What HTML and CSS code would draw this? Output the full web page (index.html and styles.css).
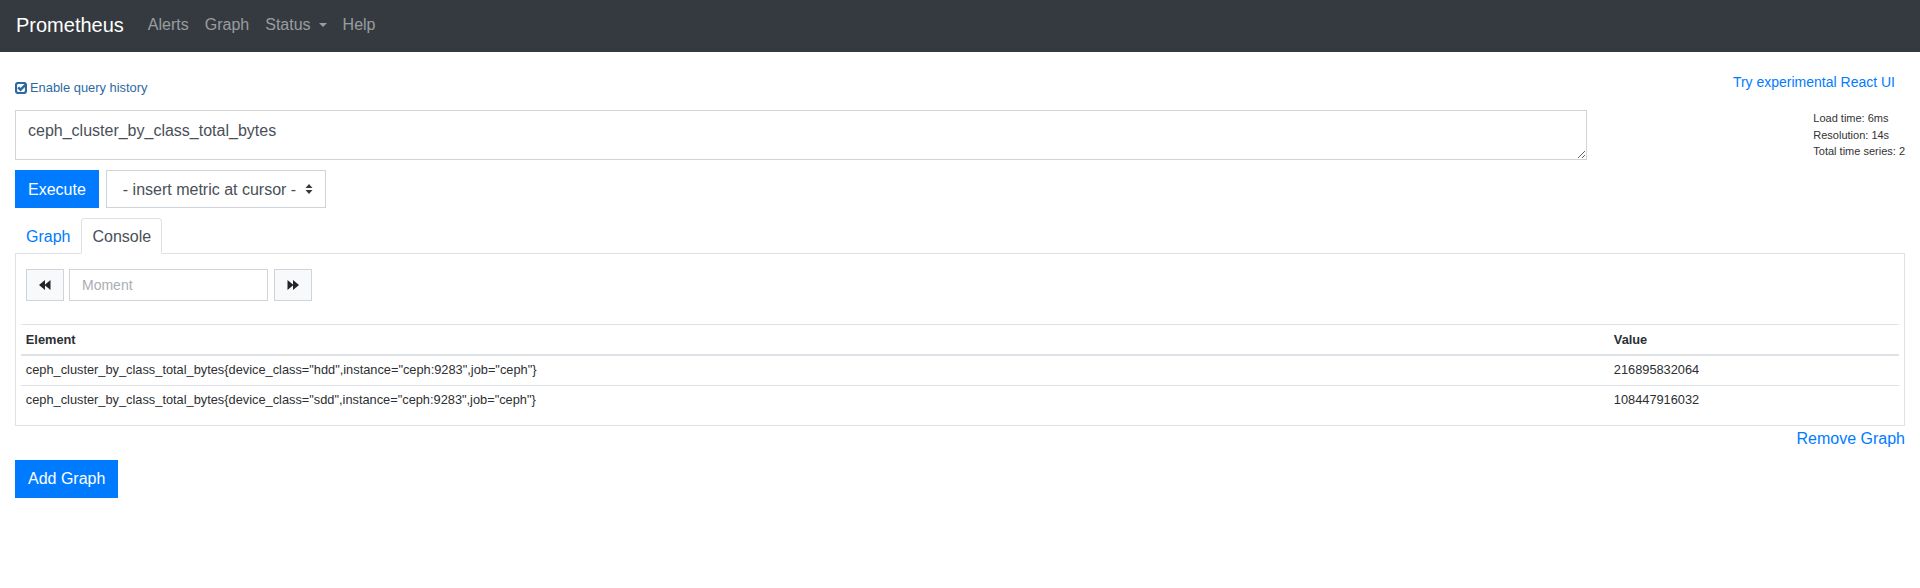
FILE: index.html
```html
<!DOCTYPE html>
<html>
<head>
<meta charset="utf-8">
<title>Prometheus Time Series Collection and Processing Server</title>
<link rel="stylesheet" href="styles.css">
</head>
<body>
<nav class="navbar">
  <a class="brand" href="#">Prometheus</a>
  <ul class="nav-links">
    <li><a href="#">Alerts</a></li>
    <li><a href="#">Graph</a></li>
    <li><a href="#">Status<span class="caret"></span></a></li>
    <li><a href="#">Help</a></li>
  </ul>
</nav>
<main class="container">
  <div class="top-row">
    <label class="history">
      <svg class="check-icon" width="12" height="12" viewBox="0 0 12 12" aria-hidden="true">
        <rect x="1" y="1" width="10" height="10" rx="2.2" ry="2.2" fill="none" stroke="currentColor" stroke-width="2.2"/>
        <path d="M3.2 5.4 L5.5 7.7 L11.2 2" fill="none" stroke="currentColor" stroke-width="2.4"/>
      </svg>
      <span>Enable query history</span>
    </label>
    <a class="react-link" href="#">Try experimental React UI</a>
  </div>
  <div class="query-row">
    <textarea class="expr" spellcheck="false">ceph_cluster_by_class_total_bytes</textarea>
    <div class="stats">
      <div>Load time: 6ms</div>
      <div>Resolution: 14s</div>
      <div>Total time series: 2</div>
    </div>
  </div>
  <div class="exec-row">
    <button class="btn-primary">Execute</button>
    <div class="metric-select">
      <span>- insert metric at cursor -</span>
      <svg class="select-arrows" width="8" height="10" viewBox="0 0 8 10" aria-hidden="true">
        <path d="M4 0 L7.5 4 H0.5 Z M4 10 L0.5 6 H7.5 Z" fill="#343a40"/>
      </svg>
    </div>
  </div>
  <ul class="tabs">
    <li><a class="tab" href="#">Graph</a></li>
    <li><a class="tab active" href="#">Console</a></li>
  </ul>
  <div class="tab-content">
    <div class="moment-row">
      <button class="btn-light" aria-label="back">
        <svg class="step-icon" width="12" height="10" viewBox="0 0 12 10" aria-hidden="true">
          <path d="M0 5 L6 0 V10 Z M5.5 5 L11.5 0 V10 Z" fill="#212529"/>
        </svg>
      </button>
      <input class="moment" type="text" placeholder="Moment">
      <button class="btn-light" aria-label="forward">
        <svg class="step-icon" width="12" height="10" viewBox="0 0 12 10" aria-hidden="true">
          <path d="M12 5 L6 0 V10 Z M6.5 5 L0.5 0 V10 Z" fill="#212529"/>
        </svg>
      </button>
    </div>
    <table class="data">
      <colgroup><col><col class="value-col"></colgroup>
      <thead>
        <tr><th>Element</th><th>Value</th></tr>
      </thead>
      <tbody>
        <tr><td>ceph_cluster_by_class_total_bytes{device_class="hdd",instance="ceph:9283",job="ceph"}</td><td>216895832064</td></tr>
        <tr><td>ceph_cluster_by_class_total_bytes{device_class="sdd",instance="ceph:9283",job="ceph"}</td><td>108447916032</td></tr>
      </tbody>
    </table>
  </div>
  <div class="remove-row"><a href="#">Remove Graph</a></div>
  <button class="btn-primary add-graph">Add Graph</button>
</main>
</body>
</html>
```
FILE: styles.css
```css
* { box-sizing: border-box; }
html, body {
  margin: 0;
  padding: 0;
  background: #fff;
  font-family: "Liberation Sans", Arial, Helvetica, sans-serif;
  font-size: 16px;
  line-height: 1.5;
  color: #212529;
}
a { text-decoration: none; }
ul { list-style: none; margin: 0; padding: 0; }

.navbar {
  height: 52px;
  background: #343a40;
  display: flex;
  align-items: flex-start;
  padding: 10px 16px 0 16px;
}
.brand {
  color: #fff;
  font-size: 20px;
  line-height: 30px;
  margin-right: 16px;
}
.nav-links { display: flex; }
.nav-links a {
  display: flex;
  align-items: center;
  color: rgba(255,255,255,0.5);
  padding: 0 8px;
  line-height: 30px;
}
.caret {
  display: inline-block;
  width: 0;
  height: 0;
  margin-left: 8px;
  border-top: 4px solid rgba(255,255,255,0.5);
  border-left: 4px solid transparent;
  border-right: 4px solid transparent;
}

.container { padding: 0 15px; }

.top-row {
  height: 58px;
  display: flex;
  justify-content: space-between;
  align-items: flex-start;
}
.history {
  margin-top: 26px;
  line-height: 20px;
  font-size: 12.9px;
  color: #2d6aa3;
  display: flex;
  align-items: center;
}
.check-icon { margin-right: 3px; margin-top: -1px; }
.react-link {
  margin-top: 20px;
  margin-right: 10px;
  line-height: 20px;
  font-size: 14px;
  color: #007bff;
}

.query-row {
  display: grid;
  grid-template-columns: 1572px 1fr;
}
.expr {
  display: block;
  width: 100%;
  height: 50px;
  margin: 0;
  padding: 8px 12px 4px 12px;
  font-family: "Liberation Sans", Arial, sans-serif;
  font-size: 16px;
  line-height: 24px;
  color: #495057;
  border: 1px solid #ced4da;
  border-radius: 0;
  outline: none;
  resize: vertical;
}
.stats {
  justify-self: end;
  font-size: 11px;
  line-height: 16.5px;
  color: #333;
}

.exec-row {
  display: flex;
  gap: 7px;
  margin-top: 10px;
}
.btn-primary {
  height: 38px;
  padding: 1px 12px 0 12px;
  background: #007bff;
  border: 1px solid #007bff;
  border-radius: 0;
  color: #fff;
  font-family: "Liberation Sans", Arial, sans-serif;
  font-size: 16px;
  line-height: 24px;
}
.metric-select {
  width: 220px;
  height: 38px;
  border: 1px solid #ced4da;
  display: flex;
  align-items: center;
  justify-content: space-between;
  padding: 1px 12px 0 16px;
  color: #495057;
  font-size: 16px;
}
.select-arrows { display: block; margin-top: -1px; }

.tabs {
  display: flex;
  margin-top: 10px;
  border-bottom: 1px solid #dee2e6;
}
.tab {
  display: block;
  padding: 6px 10px 4px 10px;
  line-height: 24px;
  border: 1px solid transparent;
  border-top-left-radius: 4px;
  border-top-right-radius: 4px;
  margin-bottom: -1px;
  color: #007bff;
}
.tab.active {
  color: #495057;
  background: #fff;
  border-color: #dee2e6 #dee2e6 #fff;
}

.tab-content {
  border: 1px solid #dee2e6;
  border-top: none;
  padding: 5px;
}
.moment-row {
  display: flex;
  align-items: stretch;
  height: 32px;
  margin: 10px 0 0 5px;
}
.btn-light {
  width: 38px;
  height: 32px;
  padding: 0;
  background: #f8f9fa;
  border: 1px solid #ced4da;
  border-radius: 0;
  display: flex;
  align-items: center;
  justify-content: center;
  flex: none;
}
.step-icon { display: block; flex: none; }
.moment {
  width: 199px;
  height: 32px;
  margin: 0 6px 0 5px;
  padding: 0 12px;
  border: 1px solid #ced4da;
  border-radius: 0;
  font-family: "Liberation Sans", Arial, sans-serif;
  font-size: 14px;
  color: #495057;
  outline: none;
}
.moment::placeholder { color: #aaaeb3; }

.data {
  width: 100%;
  margin: 23px 0 5px 0;
  border-collapse: collapse;
  table-layout: fixed;
  font-size: 12.8px;
  line-height: 19.5px;
  color: #2b2f33;
}
.value-col { width: 290px; }
.data th, .data td {
  text-align: left;
  padding: 4.8px;
  border-top: 1px solid #dee2e6;
  vertical-align: top;
  white-space: nowrap;
}
.data th { font-weight: bold; border-bottom: 2px solid #dee2e6; }
.data thead th { padding-top: 4.8px; padding-bottom: 4.3px; }

.remove-row {
  text-align: right;
  line-height: 24px;
  padding-top: 1px;
}
.remove-row a { color: #007bff; }
.add-graph { margin-top: 9px; }
```
